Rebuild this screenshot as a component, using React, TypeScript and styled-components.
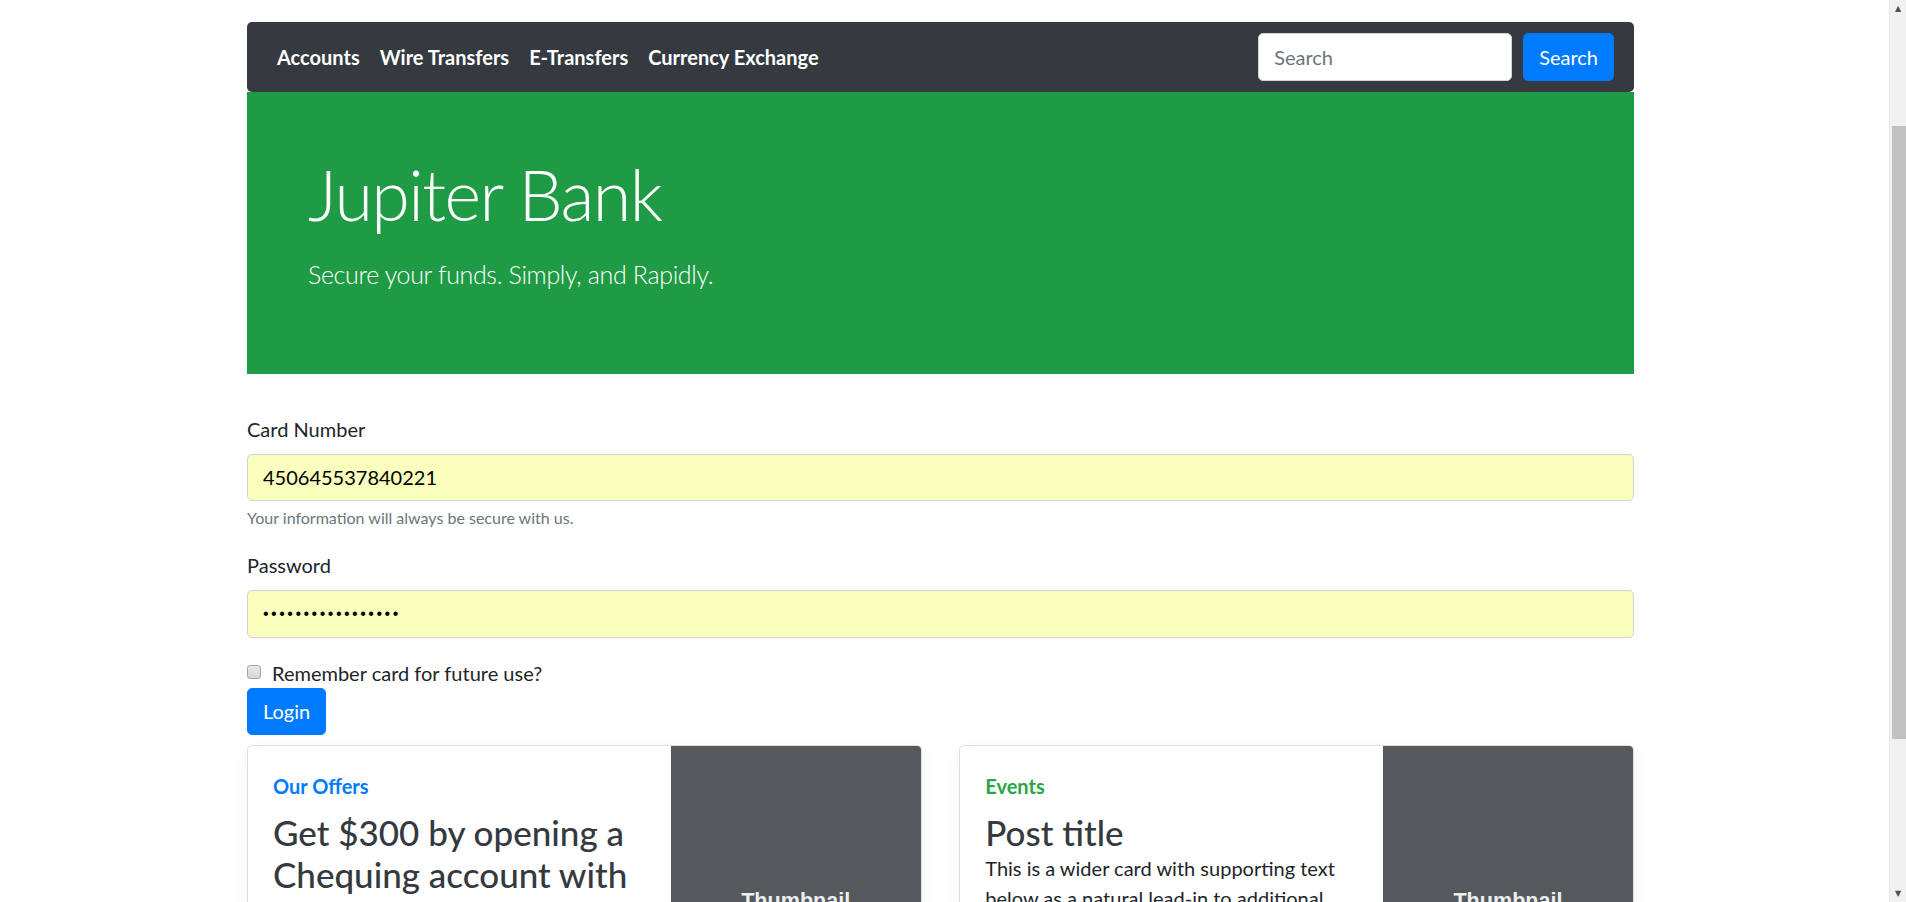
import styled, { createGlobalStyle } from 'styled-components';

const NAV_ITEMS = ['Accounts', 'Wire Transfers', 'E-Transfers', 'Currency Exchange'];

const CARDS = [
  {
    kicker: 'Our Offers',
    color: '#007bff',
    title: 'Get $300 by opening a Chequing account with us today',
    text: '',
  },
  {
    kicker: 'Events',
    color: '#28a745',
    title: 'Post title',
    text: 'This is a wider card with supporting text below as a natural lead-in to additional content.',
  },
];

const App = () => {
  return (
    <Page>
      <GlobalStyle />
      <Container>
        <Navbar>
          <NavList>
            {NAV_ITEMS.map((item) => (
              <NavLink key={item} href="#">
                {item}
              </NavLink>
            ))}
          </NavList>
          <SearchForm onSubmit={(e) => e.preventDefault()}>
            <SearchInput type="search" placeholder="Search" />
            <Button type="submit">Search</Button>
          </SearchForm>
        </Navbar>

        <Jumbotron>
          <Display>Jupiter Bank</Display>
          <Lead>Secure your funds. Simply, and Rapidly.</Lead>
        </Jumbotron>

        <form onSubmit={(e) => e.preventDefault()}>
          <FormGroup>
            <Label htmlFor="card">Card Number</Label>
            <Input id="card" type="text" defaultValue="450645537840221" />
            <Help>Your information will always be secure with us.</Help>
          </FormGroup>
          <FormGroup>
            <Label htmlFor="pass">Password</Label>
            <Input id="pass" type="password" $secret defaultValue="jupiterbank123456" />
          </FormGroup>
          <Check>
            <Checkbox type="checkbox" id="remember" />
            <CheckLabel htmlFor="remember">Remember card for future use?</CheckLabel>
          </Check>
          <Button type="submit">Login</Button>
        </form>

        <CardRow>
          {CARDS.map((card) => (
            <Card key={card.kicker}>
              <CardBody>
                <Kicker $color={card.color}>{card.kicker}</Kicker>
                <CardTitle>{card.title}</CardTitle>
                {card.text && <CardText>{card.text}</CardText>}
              </CardBody>
              <Thumb>Thumbnail</Thumb>
            </Card>
          ))}
        </CardRow>
      </Container>

      {/* window scrollbar as seen in the screenshot */}
      <ScrollTrack aria-hidden>
        <ScrollArrow>▲</ScrollArrow>
        <ScrollThumb />
        <ScrollArrow>▼</ScrollArrow>
      </ScrollTrack>
    </Page>
  );
};

export default App;

const GlobalStyle = createGlobalStyle`
  body {
    margin: 0;
    background: #fff;
    color: #212529;
    font-family: Lato, "Open Sans", "Liberation Sans", sans-serif;
    font-size: 20px;
    line-height: 1.5;
  }
  * {
    box-sizing: border-box;
  }
`;

const Page = styled.div`
  max-width: 1881px;
  padding-top: 22px;
`;

const Container = styled.div`
  width: 1387px;
  margin: 0 auto;
`;

const Navbar = styled.nav`
  display: flex;
  align-items: center;
  justify-content: space-between;
  height: 70px;
  padding: 0 20px;
  background: #343a40;
  border-radius: 5px;
`;

const NavList = styled.div`
  display: flex;
  align-items: center;
`;

const NavLink = styled.a`
  padding: 10px;
  color: #fff;
  font-weight: 700;
  line-height: 30px;
  text-decoration: none;
`;

const SearchForm = styled.form`
  display: flex;
  align-items: center;
  gap: 11px;
`;

const SearchInput = styled.input`
  width: 254px;
  height: 48px;
  padding: 0 15px;
  border: 1px solid #ced4da;
  border-radius: 5px;
  background: #fff;
  color: #495057;
  font: inherit;
  outline: none;
  &::placeholder {
    color: #6c757d;
  }
`;

const Button = styled.button`
  height: 47.5px;
  padding: 0 15px;
  border: 1px solid #007bff;
  border-radius: 5px;
  background: #007bff;
  color: #fff;
  font: inherit;
  line-height: 30px;
  cursor: pointer;
`;

const Jumbotron = styled.header`
  padding: 60px 60px 60px 61px;
  margin-bottom: 40px;
  background: #209b45;
  color: #fff;
`;

const Display = styled.h1`
  margin: 0 0 20px;
  font-size: 70px;
  font-weight: 300;
  line-height: 84px;
  letter-spacing: -1.6px;
`;

const Lead = styled.p`
  margin: 0 0 20px;
  font-size: 25px;
  font-weight: 300;
  line-height: 37.5px;
  letter-spacing: -0.35px;
`;

const FormGroup = styled.div`
  margin-bottom: 20px;
`;

const Label = styled.label`
  display: block;
  margin-bottom: 10px;
  line-height: 30px;
`;

const Input = styled.input<{ $secret?: boolean }>`
  display: block;
  width: 100%;
  height: 47.5px;
  padding: 0 15px;
  border: 1px solid #ced4da;
  border-radius: 5px;
  background: #faffbd;
  color: #000;
  font: inherit;
  outline: none;
  ${(p) =>
    p.$secret &&
    `
    font-family: "Liberation Sans", Arial, sans-serif;
    font-size: 16px;
    letter-spacing: 2.5px;
  `}
`;

const Help = styled.small`
  display: block;
  margin-top: 5px;
  color: #6c757d;
  font-size: 16px;
  line-height: 24px;
`;

const Check = styled.div`
  display: flex;
  align-items: flex-start;
  gap: 11px;
  line-height: 30px;
`;

const Checkbox = styled.input`
  appearance: none;
  flex: none;
  width: 14px;
  height: 14px;
  margin: 7px 0 0;
  border: 1px solid #a6a6a6;
  border-radius: 3px;
  background: linear-gradient(#e8e8e8, #d6d6d6);
`;

const CheckLabel = styled.label`
  color: #212529;
`;

const CardRow = styled.div`
  display: grid;
  grid-template-columns: 1fr 1fr;
  gap: 37.5px;
  margin-top: 10px;
`;

const Card = styled.article`
  display: flex;
  height: 312.5px;
  margin-bottom: 37.5px;
  border: 1px solid rgba(0, 0, 0, 0.125);
  border-radius: 5px;
  box-shadow: 0 5px 15px rgba(0, 0, 0, 0.05);
  overflow: hidden;
`;

const CardBody = styled.div`
  flex: 1;
  display: flex;
  flex-direction: column;
  align-items: flex-start;
  padding: 25px;
  min-width: 0;
`;

const Kicker = styled.strong<{ $color: string }>`
  margin-bottom: 10px;
  color: ${(p) => p.$color};
  font-weight: 700;
  line-height: 30px;
`;

const CardTitle = styled.h3`
  margin: 0;
  color: #343a40;
  font-size: 35px;
  font-weight: 500;
  line-height: 42px;
`;

const CardText = styled.p`
  margin: 0;
  line-height: 30px;
`;

const Thumb = styled.div`
  flex: none;
  width: 250px;
  display: flex;
  align-items: center;
  justify-content: center;
  background: #55595c;
  color: #eceeef;
  font-family: "Liberation Sans", Arial, sans-serif;
  font-size: 21.6px;
  font-weight: 700;
`;

const ScrollTrack = styled.div`
  position: fixed;
  top: 0;
  right: 0;
  width: 17px;
  height: 100vh;
  display: flex;
  flex-direction: column;
  background: #f1f1f1;
  border-left: 1px solid #e8e8e8;
`;

const ScrollArrow = styled.div`
  flex: none;
  height: 17px;
  display: flex;
  align-items: center;
  justify-content: center;
  color: #505050;
  font-family: "DejaVu Sans", sans-serif;
  font-size: 8px;
  line-height: 1;
`;

const ScrollThumb = styled.div`
  flex: none;
  height: 613px;
  margin: 109px 0 0 2px;
  background: #c1c1c1;
  & + div {
    margin-top: auto;
  }
`;
